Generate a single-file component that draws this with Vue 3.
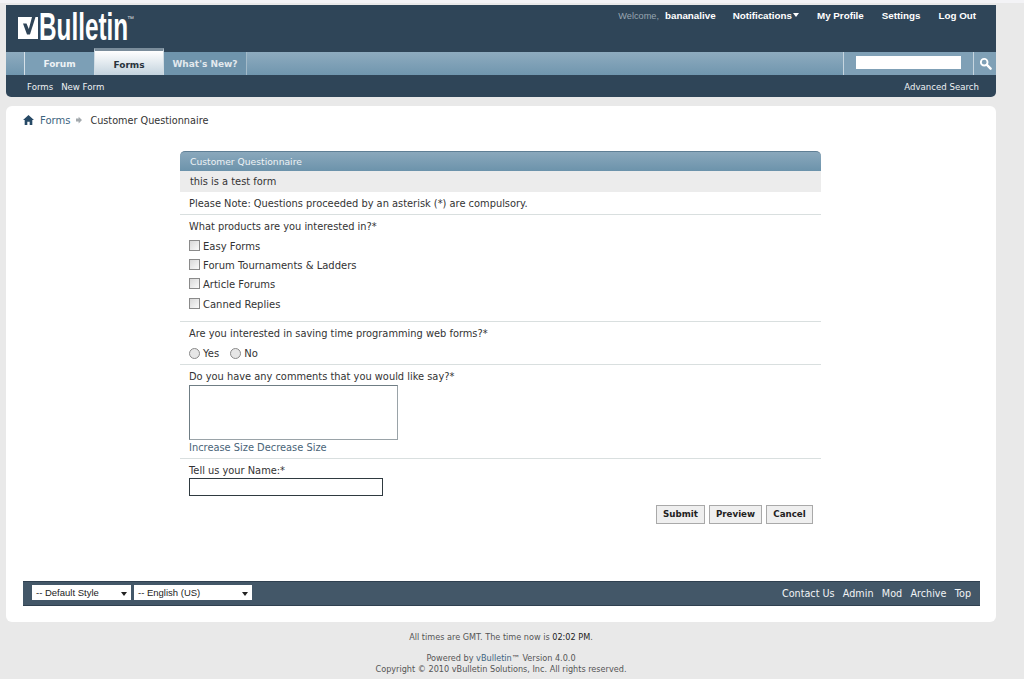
<script setup>
const tabs = [
  { label: 'Forum', cls: 'plain' },
  { label: 'Forms', cls: 'active' },
  { label: "What's New?", cls: 'dim' }
]
const topLinks = ['My Profile', 'Settings', 'Log Out']
const products = ['Easy Forms', 'Forum Tournaments & Ladders', 'Article Forums', 'Canned Replies']
const footLinks = ['Contact Us', 'Admin', 'Mod', 'Archive', 'Top']
</script>

<template>
  <div class="page">
    <header class="head">
      <div class="brand">
        <div class="logo">
          <svg class="logo-mark" width="20" height="22" viewBox="0 0 20 22">
            <path d="M0 0H20V22H0Z" fill="#fff" />
            <path d="M5 6.5H8.5L10.8 12 14 0H20V3.5L13.2 17.5H9Z" fill="#2f4558" />
            <path d="M17.5 0H20V5L13.2 19H11.5Z" fill="#fff" />
          </svg>
          <span class="logo-text">Bulletin</span>
          <span class="tm">™</span>
        </div>
        <nav class="top-links">
          <span class="welcome">Welcome,</span>
          <b class="user">bananalive</b>
          <b class="notif">Notifications<i class="caret"></i></b>
          <b v-for="l in topLinks" :key="l">{{ l }}</b>
        </nav>
      </div>
      <div class="navbar">
        <div class="tabs">
          <span v-for="t in tabs" :key="t.label" class="tab" :class="t.cls">{{ t.label }}</span>
        </div>
        <div class="search">
          <div class="search-field"><span class="search-input"></span></div>
          <div class="search-btn">
            <svg width="13" height="13" viewBox="0 0 14 14">
              <circle cx="5.6" cy="5.6" r="3.6" fill="none" stroke="#fff" stroke-width="2" />
              <path d="M8.5 8.5 12.5 12.5" stroke="#fff" stroke-width="2.6" stroke-linecap="round" />
            </svg>
          </div>
        </div>
      </div>
      <div class="subbar">
        <div class="sub-left"><span>Forms</span><span>New Form</span></div>
        <span>Advanced Search</span>
      </div>
    </header>

    <main class="content">
      <div class="crumbs">
        <svg width="11" height="10" viewBox="0 0 12 11">
          <path d="M6 0 12 5.6H10.2V11H7.3V7.4H4.7V11H1.8V5.6H0Z" fill="#274a66" />
        </svg>
        <a class="crumb-link">Forms</a>
        <svg class="crumb-sep" width="6" height="8" viewBox="0 0 8 9">
          <path d="M3.5 0 8 4.5 3.5 9V6.5H0V2.5H3.5Z" fill="#a3a9ad" />
        </svg>
        <span>Customer Questionnaire</span>
      </div>

      <section class="form">
        <h2 class="form-title">Customer Questionnaire</h2>
        <div class="form-desc">this is a test form</div>
        <div class="row note">Please Note: Questions proceeded by an asterisk (*) are compulsory.</div>
        <div class="row q1">
          <div class="q">What products are you interested in?*</div>
          <div class="checks">
            <div v-for="p in products" :key="p" class="opt"><span class="check"></span>{{ p }}</div>
          </div>
        </div>
        <div class="row q2">
          <div class="q">Are you interested in saving time programming web forms?*</div>
          <div class="radios">
            <span class="opt"><span class="radio"></span>Yes</span>
            <span class="opt"><span class="radio"></span>No</span>
          </div>
        </div>
        <div class="row q3">
          <div class="q">Do you have any comments that you would like say?*</div>
          <div class="area"></div>
          <div class="resize">Increase Size Decrease Size</div>
        </div>
        <div class="q4">
          <div class="q">Tell us your Name:*</div>
          <div class="name"></div>
        </div>
        <div class="buttons">
          <span class="btn b1">Submit</span>
          <span class="btn b2">Preview</span>
          <span class="btn b3">Cancel</span>
        </div>
      </section>

      <div class="foot-bar">
        <div class="selects">
          <div class="select s1">-- Default Style<i class="sel-caret"></i></div>
          <div class="select s2">-- English (US)<i class="sel-caret"></i></div>
        </div>
        <div class="foot-links"><span v-for="l in footLinks" :key="l">{{ l }}</span></div>
      </div>
    </main>

    <footer class="legal">
      <p class="time">All times are GMT. The time now is <span class="now">02:02 PM</span>.</p>
      <p>Powered by <span class="vb">vBulletin</span>™ Version 4.0.0</p>
      <p>Copyright © 2010 vBulletin Solutions, Inc. All rights reserved.</p>
    </footer>
  </div>
</template>

<style>
html, body { margin: 0; background: #e9e9e9; }
</style>

<style scoped>
.page {
  width: 1024px;
  height: 679px;
  overflow: hidden;
  box-sizing: border-box;
  padding: 2px 28px 0 6px;
  border-top: 3px solid #f3f3f6;
  font-family: "DejaVu Sans", Verdana, sans-serif;
  font-size: 10px;
  color: #333;
}
.head {
  width: 990px;
  height: 92px;
  border-radius: 0 0 5px 5px;
  background: #2f4558;
  color: #fff;
  overflow: hidden;
}
.brand { height: 47px; display: flex; justify-content: space-between; }
.logo { display: flex; align-items: flex-start; padding: 0 0 0 12px; height: 47px; }
.logo-mark { margin-top: 12px; }
.logo-text {
  font: bold 38px/44px "Liberation Sans", sans-serif;
  display: inline-block;
  width: 90px;
  margin-left: 1px;
  transform: scaleX(0.64);
  transform-origin: left center;
  white-space: nowrap;
}
.tm { font: 7px/10px "Liberation Sans", sans-serif; margin: 9px 0 0 -2px; color: #ddd; }
.top-links {
  display: flex;
  gap: 18px;
  padding: 5px 20px 0 0;
  line-height: 12px;
  font-family: "Liberation Sans", sans-serif;
  font-size: 9.8px;
}
.welcome { color: #99a6b1; margin-right: -12px; font-size: 9.2px; }
.user { margin-right: -1px; }
.caret {
  display: inline-block;
  border: 3.5px solid transparent;
  border-top: 4px solid #fff;
  border-bottom: 0;
  margin-left: 1px;
  vertical-align: 2px;
}
.navbar {
  height: 23px;
  display: flex;
  justify-content: space-between;
  background: linear-gradient(#8eabbf, #7096ae);
}
.tabs { display: flex; padding-left: 18px; height: 23px; }
.tab {
  box-sizing: border-box;
  height: 23px;
  text-align: center;
  font: bold 9px/25px "DejaVu Sans", sans-serif;
}
.plain { width: 70px; color: #eef2f5; border-left: 1px solid #d5e0e8; background: #7c9fb6; }
.active {
  width: 70px;
  height: 27px;
  margin-top: -4px;
  line-height: 29px;
  color: #28333c;
  background: linear-gradient(#fff, #c3d3de);
  border-top: 3px solid #7b8d9b;
  border-left: 1px solid #cfdbe3;
  border-right: 1px solid #cfdbe3;
}
.dim { width: 83px; color: #e2e9ee; background: #6f94ac; border-right: 1px solid #a3bac9; }
.search { display: flex; }
.search-field {
  width: 131px;
  border-left: 1px solid #c6d5df;
  border-right: 1px solid #c6d5df;
  padding: 4px 0 0 12px;
  box-sizing: border-box;
  background: #7fa0b6;
}
.search-input { display: block; width: 105px; height: 13px; background: #fff; }
.search-btn { width: 22px; background: #7fa0b6; display: flex; align-items: center; justify-content: center; }
.subbar {
  height: 22px;
  display: flex;
  justify-content: space-between;
  align-items: center;
  padding: 1px 17px 0 21px;
  box-sizing: border-box;
  font-size: 8.6px;
  color: #eef1f4;
}
.sub-left { display: flex; gap: 8px; }

.content {
  width: 990px;
  height: 516px;
  box-sizing: border-box;
  margin-top: 9px;
  padding: 0 16px 0 17px;
  background: #fff;
  border-radius: 6px;
  overflow: hidden;
}
.crumbs {
  height: 28px;
  margin-bottom: 17px;
  display: flex;
  align-items: center;
  gap: 6px;
  font-size: 9.7px;
  color: #333;
}
.crumb-link { color: #3d6480; font-size: 10px; }
.crumb-sep { margin: 0 2px 0 0; }
.form { margin-left: 157px; width: 641px; font-size: 9.85px; color: #333; }
.form-title {
  margin: 0;
  height: 20px;
  box-sizing: border-box;
  padding-left: 10px;
  font: normal 9.2px/19px "DejaVu Sans", sans-serif;
  color: #eef3f6;
  background: linear-gradient(#8aa8bc, #6c93ab);
  border-radius: 5px 5px 0 0;
  border-top: 1px solid #5f7f95;
}
.form-desc { height: 21px; line-height: 22px; padding-left: 10px; background: #ececec; }
.row { padding-left: 9px; border-bottom: 1px solid #d9dfdf; box-sizing: border-box; }
.note { height: 23px; line-height: 24px; }
.q { line-height: 14px; }
.q1 { height: 107px; padding-top: 5px; }
.checks { margin-top: 3px; display: flex; flex-direction: column; font-size: 10px; }
.opt { display: flex; align-items: center; height: 19.33px; line-height: 14px; }
.check {
  width: 11px;
  height: 11px;
  box-sizing: border-box;
  border: 1px solid #8a8a8a;
  background: linear-gradient(135deg, #d8d8d8, #fafafa);
  margin-right: 3px;
  margin-top: -3px;
}
.q2 { height: 43px; padding-top: 5px; }
.radios { display: flex; gap: 10px; margin-top: 5px; font-size: 10px; }
.radios .opt { display: inline-flex; height: 16px; }
.radio {
  width: 11px;
  height: 11px;
  box-sizing: border-box;
  border: 1px solid #8a8a8a;
  border-radius: 50%;
  background: #e6e6e6;
  margin-right: 3px;
  margin-top: -2px;
}
.radios .opt + .opt { margin-left: 1px; }
.q3 { height: 94px; padding-top: 5px; }
.area {
  width: 209px;
  height: 55px;
  box-sizing: border-box;
  border: 1px solid #6f7d84;
  border-right-color: #9aa3a8;
  border-bottom-color: #9aa3a8;
  margin-top: 1px;
}
.resize { color: #4a6478; line-height: 14px; margin-top: 1px; }
.q4 { padding: 5px 0 0 9px; }
.name { width: 194px; height: 18px; box-sizing: border-box; border: 1px solid #2f3a40; }
.buttons { display: flex; justify-content: flex-end; gap: 4px; padding-right: 8px; margin-top: 9px; }
.btn {
  height: 19px;
  box-sizing: border-box;
  border: 1px solid #a9a9a9;
  background: #efefef;
  text-align: center;
  font: bold 8.7px/17px "DejaVu Sans", sans-serif;
  color: #222;
}
.b1 { width: 49px; }
.b2 { width: 53px; }
.b3 { width: 47px; }
.foot-bar {
  margin-top: 57px;
  width: 957px;
  height: 25px;
  box-sizing: border-box;
  background: #435768;
  border-top: 1px solid #2f4050;
  border-bottom: 1px solid #2f4050;
  display: flex;
  justify-content: space-between;
  align-items: center;
  padding: 0 9px;
  color: #fff;
}
.selects { display: flex; gap: 3px; margin-top: -2px; }
.select {
  height: 15px;
  background: #fff;
  color: #222;
  font: 9.5px/15px "Liberation Sans", sans-serif;
  padding-left: 4px;
  box-sizing: border-box;
  position: relative;
}
.s1 { width: 99px; }
.s2 { width: 118px; }
.sel-caret {
  position: absolute;
  right: 4px;
  top: 7px;
  border: 3px solid transparent;
  border-top: 4px solid #222;
  border-bottom: 0;
}
.foot-links { display: flex; gap: 8.3px; font-size: 9.65px; color: #f2f4f6; }

.legal { width: 990px; text-align: center; font-size: 8.15px; line-height: 11px; color: #555; padding-top: 10px; }
.legal p { margin: 0; }
.legal .time { margin-bottom: 10px; }
.now { color: #222; }
.vb { color: #3d6480; }
</style>
